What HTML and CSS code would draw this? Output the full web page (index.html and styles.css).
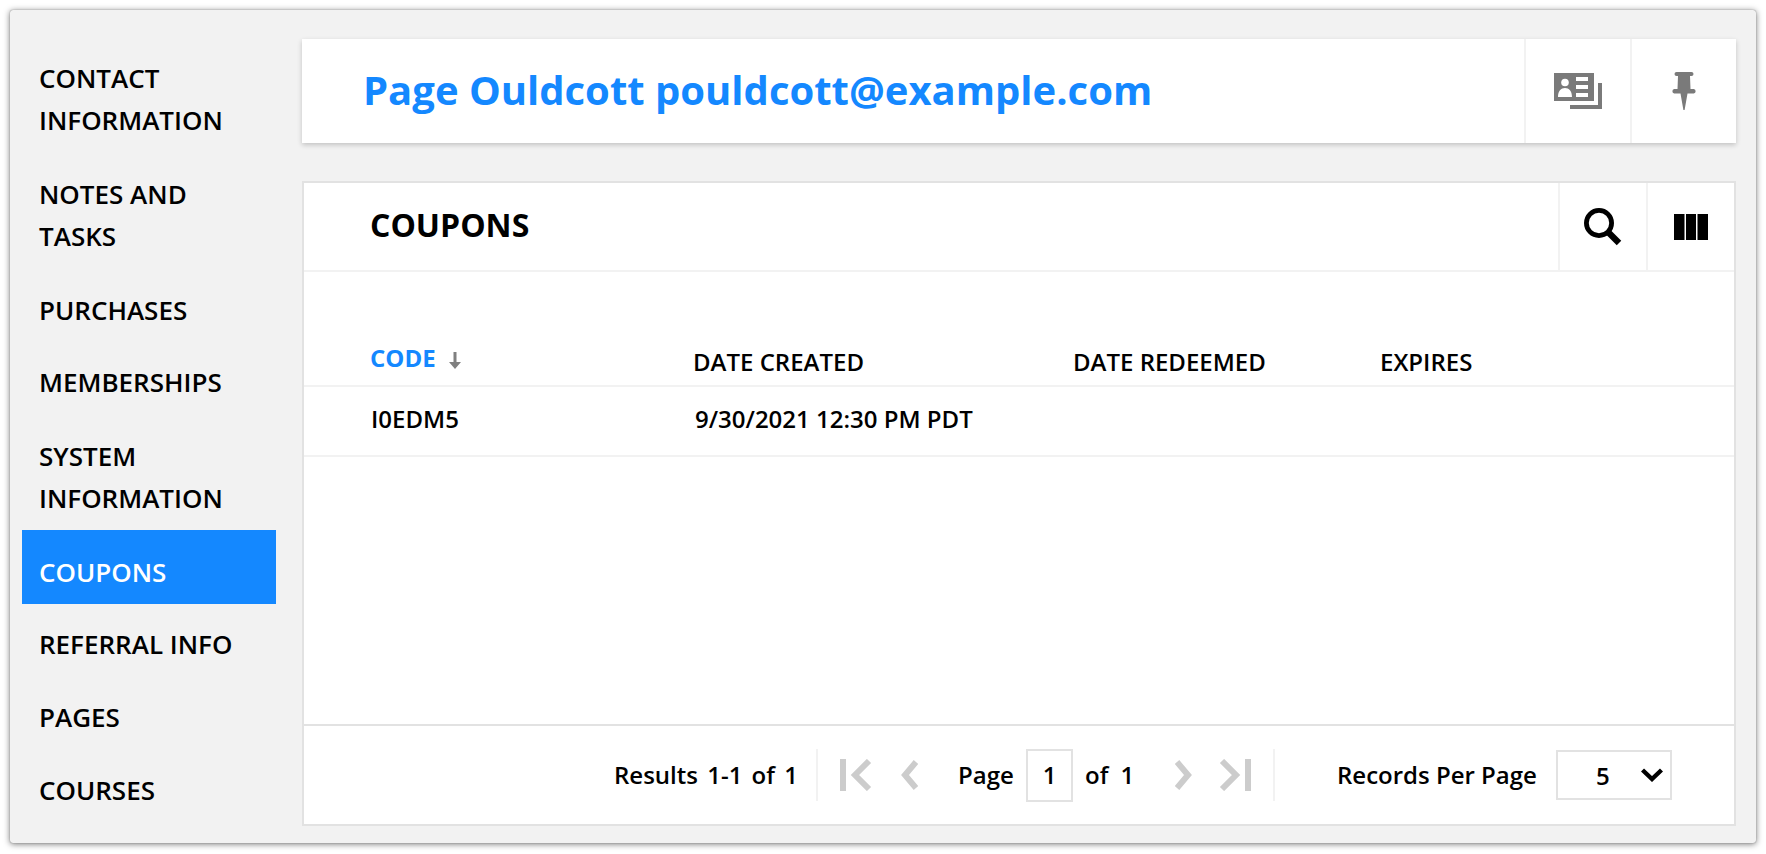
FILE: index.html
```html
<!DOCTYPE html>
<html lang="en">
<head>
<meta charset="utf-8">
<title>Coupons</title>
<link rel="stylesheet" href="styles.css">
</head>
<body>
<div class="window">
  <nav class="sidebar">
    <a class="nav-item">CONTACT INFORMATION</a>
    <a class="nav-item">NOTES AND TASKS</a>
    <a class="nav-item nav-tight">PURCHASES</a>
    <a class="nav-item">MEMBERSHIPS</a>
    <a class="nav-item nav-before-active">SYSTEM INFORMATION</a>
    <a class="nav-item nav-active">COUPONS</a>
    <a class="nav-item nav-after-active">REFERRAL INFO</a>
    <a class="nav-item nav-pages">PAGES</a>
    <a class="nav-item nav-tight">COURSES</a>
  </nav>
  <main class="main">
    <header class="contact-bar">
      <h1 class="contact-name">Page Ouldcott pouldcott@example.com</h1>
      <div class="bar-btn">
        <svg width="48" height="36" viewBox="0 0 48 36"><path fill="#7a7a7a" d="M0 0h40v28H0z"/><circle cx="11" cy="9.500" r="3.800" fill="#fff"/><path fill="#fff" d="M4 24c0-6 3-9 7-9s7 3 7 9zM22 4h12v4H22zM22 12h12v4H22zM22 20h12v4H22z"/><path fill="#7a7a7a" d="M44 10h4v26H16v-4h28z"/></svg>
      </div>
      <div class="bar-btn">
        <svg width="24" height="38" viewBox="0 0 24 38"><path fill="#7a7a7a" d="M4.500 0h15a2 2 0 0 1 0 4H18l.5 13h3.300a2.300 2.300 0 0 1 0 4.500H15.500L12.600 38h-1.200L8.500 21.500H2.200a2.300 2.300 0 0 1 0-4.500h3.300L6 4H4.500a2 2 0 0 1 0-4z"/></svg>
      </div>
    </header>
    <section class="card">
      <div class="card-head">
        <h2 class="card-title">COUPONS</h2>
        <div class="head-btn">
          <svg width="38" height="38" viewBox="0 0 38 38"><circle cx="15" cy="15" r="12.600" fill="none" stroke="#000" stroke-width="4.800"/><path d="M24 24 35 35" stroke="#000" stroke-width="6.400" fill="none"/></svg>
        </div>
        <div class="head-btn">
          <svg width="34" height="26" viewBox="0 0 34 26"><path fill="#000" d="M0 0h10.500v26H0zM12 0h10v26H12zM23.500 0H34v26H23.500z"/></svg>
        </div>
      </div>
      <div class="table">
        <div class="row row-head">
          <div class="cell cell-sorted">CODE <svg class="sort-arrow" width="14" height="17" viewBox="0 0 14 17"><path fill="#808080" d="M5.500 0h3v10H13l-6 7-6-7h4.500z"/></svg></div>
          <div class="cell cell-head">DATE CREATED</div>
          <div class="cell">DATE REDEEMED</div>
          <div class="cell">EXPIRES</div>
        </div>
        <div class="row row-body">
          <div class="cell cell-code">I0EDM5</div>
          <div class="cell cell-date">9/30/2021 12:30 PM PDT</div>
          <div class="cell"></div>
          <div class="cell"></div>
        </div>
      </div>
      <footer class="pager">
        <span class="pg-results pg-text">Results 1-1 of 1</span>
        <span class="pg-sep"></span>
        <svg class="pg-first" width="32" height="32" viewBox="0 0 32 32"><path fill="#ccc" d="M0 0h6v32H0z"/><path fill="none" stroke="#ccc" stroke-width="6" d="M29 2 15 16l14 14"/></svg>
        <svg class="pg-prev" width="18" height="30" viewBox="0 0 18 30"><path fill="none" stroke="#ccc" stroke-width="6" d="M16 2 5 15l11 13"/></svg>
        <span class="pg-page pg-text">Page</span>
        <span class="pg-input">1</span>
        <span class="pg-of pg-text">of 1</span>
        <svg class="pg-next" width="18" height="30" viewBox="0 0 18 30"><path fill="none" stroke="#ccc" stroke-width="6" d="M2 2l11 13L2 28"/></svg>
        <svg class="pg-last" width="32" height="32" viewBox="0 0 32 32"><path fill="#ccc" d="M26 0h6v32h-6z"/><path fill="none" stroke="#ccc" stroke-width="6" d="M3 2l14 14L3 30"/></svg>
        <span class="pg-sep pg-sep-2"></span>
        <span class="pg-records pg-text">Records Per Page</span>
        <span class="pg-select">5<svg class="pg-caret" width="22" height="14" viewBox="0 0 22 14"><path fill="none" stroke="#000" stroke-width="4.400" d="M1.500 2 11 11l9.500-9"/></svg></span>
      </footer>
    </section>
  </main>
</div>
</body>
</html>
```
FILE: styles.css
```css
* { box-sizing: border-box; }
html, body { margin: 0; height: 100%; background: #fff; }
body {
  padding: 10px 10px 11px 10px;
  font-family: "Open Sans", sans-serif;
  color: #000;
  overflow: hidden;
}
.window {
  display: flex;
  height: 833px;
  background: #f2f2f2;
  border-radius: 3px;
  box-shadow: 0 0 1px #666, 0 1px 6px rgba(0,0,0,.55);
}
.sidebar {
  width: 292px;
  padding: 31px 0 0 12px;
  flex: none;
}
.nav-item {
  display: block;
  width: 254px;
  padding: 16px 17px;
  font-size: 26px;
  font-weight: 600;
  line-height: 42px;
}
.nav-tight { padding-bottom: 14px; }
.nav-pages { padding-bottom: 15px; }
.nav-before-active { padding-bottom: 11px; }
.nav-active { padding: 21px 17px 11px; background: #1488ff; color: #fff; }
.nav-after-active { padding: 19px 17px 15px; }
.main { flex: 1; padding: 29px 20px 0 0; }
.contact-bar {
  display: flex;
  height: 104px;
  background: #fff;
  box-shadow: 0 2px 5px rgba(0,0,0,.2);
}
.contact-name {
  flex: 1;
  margin: 0;
  padding-left: 61px;
  font-size: 40px;
  font-weight: 700;
  line-height: 102px;
  color: #1488ff;
}
.bar-btn {
  display: flex;
  align-items: center;
  justify-content: center;
  width: 106px;
  border-left: 2px solid #f2f2f2;
}
.card {
  margin-top: 38px;
  height: 645px;
  display: flex;
  flex-direction: column;
  background: #fff;
  border: 2px solid #e2e2e2;
}
.card-head {
  display: flex;
  height: 89px;
  border-bottom: 2px solid #f2f2f2;
  flex: none;
}
.card-title {
  flex: 1;
  margin: 0;
  padding-left: 66px;
  font-size: 32px;
  font-weight: 700;
  line-height: 83px;
}
.head-btn {
  display: flex;
  align-items: center;
  justify-content: center;
  width: 88px;
  border-left: 2px solid #f2f2f2;
}
.table { flex: 1; padding-top: 62px; }
.row {
  display: grid;
  grid-template-columns: 324px 379px 307px 1fr;
  padding-left: 66px;
  border-bottom: 2px solid #f2f2f2;
  font-size: 24px;
  font-weight: 600;
}
.row-head { height: 53px; padding-top: 9px; line-height: 37px; }
.row-body { height: 70px; line-height: 63px; }
.cell-head { margin-left: -1px; }
.cell-sorted { color: #1488ff; font-weight: 700; line-height: 29px; }
.cell-code { padding-left: 1px; }
.cell-date { padding-left: 1px; }
.sort-arrow { margin-left: 6px; vertical-align: -2px; }
.pager {
  flex: none;
  height: 100px;
  display: flex;
  align-items: center;
  padding-left: 310px;
  border-top: 2px solid #e2e2e2;
  font-size: 24px;
  font-weight: 600;
}
.pg-text { margin-bottom: 2px; }
.pg-results { width: 202px; word-spacing: 3px; white-space: nowrap; }
.pg-sep { width: 2px; height: 52px; background: #f2f2f2; }
.pg-first { margin-left: 22px; }
.pg-prev { margin-left: 28px; }
.pg-page { margin-left: 40px; width: 68px; }
.pg-input {
  width: 47px;
  height: 53px;
  border: 2px solid #e2e2e2;
  line-height: 48px;
  text-align: center;
}
.pg-of { margin-left: 12px; width: 77px; word-spacing: 6px; white-space: nowrap; }
.pg-next { margin-left: 13px; }
.pg-last { margin-left: 26px; }
.pg-sep-2 { margin-left: 22px; }
.pg-records { margin-left: 62px; width: 219px; white-space: nowrap; }
.pg-select {
  display: flex;
  align-items: center;
  width: 116px;
  height: 50px;
  padding-left: 38px;
  border: 2px solid #e2e2e2;
}
.pg-caret { margin-left: 31px; }
```
